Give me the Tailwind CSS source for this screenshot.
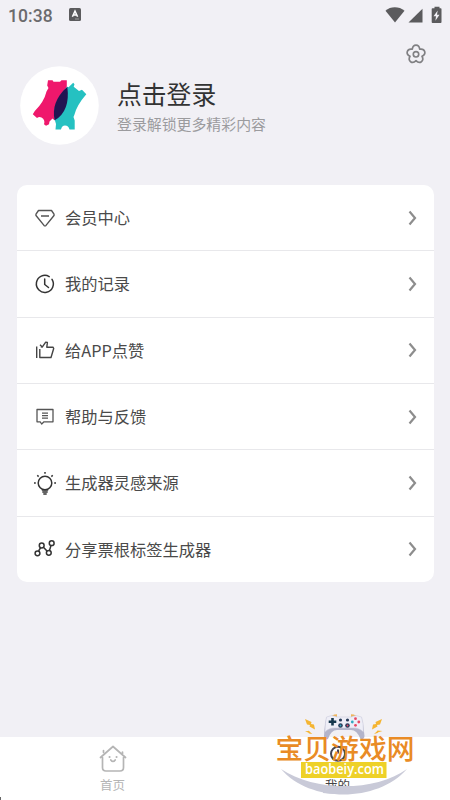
<!DOCTYPE html>
<html lang="zh-CN">
<head>
<meta charset="utf-8">
<meta name="viewport" content="width=device-width, initial-scale=1">
<title>我的</title>
<script src="https://cdn.jsdelivr.net/npm/@tailwindcss/browser@4"></script>
</head>
<body class="bg-[#f1f0f5]">
<div class="relative flex h-[800px] w-[450px] flex-col overflow-hidden bg-[#f1f0f5] font-['Noto_Sans_CJK_SC',sans-serif] text-[#4a4a4a]">
  <!-- status bar -->
  <header class="flex h-8 shrink-0 items-center justify-between pl-2 pr-[8px] text-[#5b5b5d]">
    <div class="flex items-center gap-[17px]">
      <span class="font-[Roboto,sans-serif] text-[17.5px] leading-8 font-medium tracking-[0.1px] text-[#6b6b6d]">10:38</span>
      <svg class="-mt-[3px] -ml-px h-[13px] w-3" viewBox="0 0 12 13"><rect width="12" height="13" rx="1.5" fill="#5b5b5d"/><path d="M3.4 8.8 6 3.1l2.6 5.7M4.3 7h3.4" fill="none" stroke="#fff" stroke-width="1.5"/><path d="M6 11h4" stroke="#aaa" stroke-width=".8"/></svg>
    </div>
    <svg class="-mt-[2px] h-5 w-[58px]" viewBox="0 0 58 20" fill="currentColor"><path d="M1.500 5.800C6.500 1.200 15 1.200 20.500 5.800L11 17.500Z"/><path d="M38.500 3.800V17.500H24.500Z"/><path d="M48.500 3.300h2V1.800h5v1.500h1.200q.8 0 .8.800v13q0 .9-.8.900h-8.200q-.8 0-.8-.9v-13q0-.8.800-.8Z"/><path d="M53.700 5.500 49.500 11.300h2.500L51.400 15.700 55.500 9.800h-2.500Z" fill="#f1f0f5"/></svg>
  </header>
  <!-- settings -->
  <div class="flex h-[33px] shrink-0 justify-end pt-[11px] pr-[23px]">
    <svg class="h-[22px] w-[22px]" viewBox="-11 -11.300 22 22" fill="none" stroke="#808083" stroke-width="1.700" stroke-linejoin="round"><path d="M-3.700-5.100C-3-10.500 3-10.500 3.700-5.100C9.050-6.100 10.900-.4 6 1.950C8.600 6.700 3.700 10.300 0 6.300C-3.700 10.300-8.600 6.700-6 1.950C-10.900-.4-9.050-6.100-3.700-5.100Z"/><circle r="2.700"/></svg>
  </div>
  <!-- profile -->
  <section class="flex h-[120px] shrink-0 items-start pl-5">
    <svg class="mt-px h-[79px] w-[79px] shrink-0" viewBox="0 0 79 79">
      <circle cx="39.500" cy="39.500" r="39.300" fill="#fff"/>
      <path d="M28 14.300H32.500L33.500 15.700H40L41.500 14.300H46.800V20.700L45.600 22.500L47.500 26Q49 45 34.500 54.300L32.500 52.500L29.500 55.500L29 58.200L26 59.800L24 58.300Q25.500 54 21.500 51.500Q19 50.500 17 52L12.800 48.300L14.800 45Q24 36 26.500 25.500L28.500 22L27.200 19.500Z" fill="#ef186c"/>
      <path d="M47.300 20.700 48.500 21.200 53.200 16.700 54.500 18.200 53.700 20.700 59 24.900 62 23.700 66.300 28.300Q57 39 54.500 48.500L53.500 51L54.700 54.500V63.500H49.500Q48.500 59.500 45 59.500Q41.800 59.500 41 63.500H35.500L36 58L34.800 54Q31 37 47.300 20.700Z" fill="#25c1c1"/>
      <path d="M47.300 20.700Q50.500 45 34.700 54.300Q30.500 36 47.300 20.700Z" fill="#221452"/>
    </svg>
    <div class="pl-[18px] pt-[11px]">
      <h1 class="h-[37px] text-[24.800px] leading-[35px] text-[#333]">点击登录</h1>
      <p class="text-[14.900px] leading-[22px] text-[#9b9b9e]">登录解锁更多精彩内容</p>
    </div>
  </section>
  <!-- menu -->
  <nav class="mr-4 ml-[17px] flex h-[397px] shrink-0 flex-col divide-y divide-[#e8e8eb] overflow-hidden rounded-[10px] bg-white text-[16.250px] leading-6">
    <a class="flex flex-1 items-center pl-4 pr-[15px]"><svg class="mr-2 h-6 w-6" viewBox="0 0 24 24" fill="none" stroke="#555" stroke-width="1.400" stroke-linejoin="round"><path d="M5.500 4.500h13L21 8.200q.4.800-.2 1.500L13 19.400q-1 1-2 0L3.200 9.700Q2.600 9 3 8.200ZM8 10h8"/></svg><span class="flex-1 pb-px">会员中心</span><svg class="h-4 w-3" viewBox="0 0 12 16" fill="none" stroke="#8d8d8d" stroke-width="2.200"><path d="m2.500 1.500 5.500 6.500-5.500 6.500"/></svg></a>
    <a class="flex flex-1 items-center pl-4 pr-[15px]"><svg class="mr-2 h-6 w-6" viewBox="0 0 24 24" fill="none" stroke="#333" stroke-width="1.500" stroke-linecap="round"><path d="M16.200 4.600A8.500 8.500 0 1 0 19 7.300M11.700 7v5.500l3.800 3"/></svg><span class="flex-1 pb-px">我的记录</span><svg class="h-4 w-3" viewBox="0 0 12 16" fill="none" stroke="#8d8d8d" stroke-width="2.200"><path d="m2.500 1.500 5.500 6.500-5.500 6.500"/></svg></a>
    <a class="flex flex-1 items-center pl-4 pr-[15px]"><svg class="mr-2 h-6 w-6" viewBox="0 0 24 24" fill="none" stroke="#444" stroke-width="1.400" stroke-linejoin="round"><path d="M3.700 8.500v11.500M6.800 11v8.500H18l2.700-9-.7-1.300h-6.200l.6-4.700-1.700-.4-3.500 5-1.400-.2M7 6.700l2.500 2.500"/></svg><span class="flex-1 pb-px">给APP点赞</span><svg class="h-4 w-3" viewBox="0 0 12 16" fill="none" stroke="#8d8d8d" stroke-width="2.200"><path d="m2.500 1.500 5.500 6.500-5.500 6.500"/></svg></a>
    <a class="flex flex-1 items-center pl-4 pr-[15px]"><svg class="mr-2 h-6 w-6" viewBox="0 0 24 24" fill="none" stroke="#555" stroke-width="1.300" stroke-linejoin="round"><path d="M4 4.500h16v12.300h-9l-2.300 2.200-1.500-2.200H4ZM9 8.200h6M9 10.700h6M9 13.200h6"/></svg><span class="flex-1 pb-0.5">帮助与反馈</span><svg class="h-4 w-3" viewBox="0 0 12 16" fill="none" stroke="#8d8d8d" stroke-width="2.200"><path d="m2.500 1.500 5.500 6.500-5.500 6.500"/></svg></a>
    <a class="flex flex-1 items-center pl-4 pr-[15px]"><svg class="mr-2 h-6 w-6" viewBox="0 0 24 24" fill="none" stroke="#333" stroke-width="1.500"><circle cx="12" cy="12" r="6.800"/><path d="M8.800 18.900h6.400M9.300 20.900h5.400M10.300 22.900h3.400M12 1v1.800M4.300 4.300l1.300 1.300M19.700 4.300l-1.300 1.300M1 12h1.800M21.200 12H23"/></svg><span class="flex-1 pb-px">生成器灵感来源</span><svg class="h-4 w-3" viewBox="0 0 12 16" fill="none" stroke="#8d8d8d" stroke-width="2.200"><path d="m2.500 1.500 5.500 6.500-5.500 6.500"/></svg></a>
    <a class="flex flex-1 items-center pl-4 pr-[15px]"><svg class="mr-2 h-6 w-6" viewBox="0 0 24 24" fill="none" stroke="#333" stroke-width="1.500"><circle cx="4.500" cy="16.300" r="2.400"/><circle cx="8.700" cy="8.500" r="2.400"/><circle cx="15.800" cy="15.800" r="2.400"/><circle cx="18.700" cy="6.200" r="2.400"/><path d="m5.600 14 2-3.400M10.400 10.200l3.600 3.800M16.500 13.400l1.500-4.900"/></svg><span class="flex-1 pb-px">分享票根标签生成器</span><svg class="h-4 w-3" viewBox="0 0 12 16" fill="none" stroke="#8d8d8d" stroke-width="2.200"><path d="m2.500 1.500 5.500 6.500-5.500 6.500"/></svg></a>
  </nav>
  <!-- tab bar -->
  <footer class="mt-auto grid h-[63px] shrink-0 grid-cols-2 bg-white text-[12.500px] leading-5">
    <div class="flex flex-col items-center pt-[7px] text-[#b5b5b5]">
      <svg class="h-[30px] w-7" viewBox="0 0 28 30" fill="none" stroke="#b5b5b5" stroke-width="1.700" stroke-linecap="round" stroke-linejoin="round"><path d="M1.500 13.500 14 2.500l12.500 11M4.500 8.300V6.500M3.500 13.500v10q0 3.500 3.500 3.500h14q3.500 0 3.500-3.500v-10M23.500 10V8M11.800 16q2.200 3 4.400 0"/><path d="M10.500 13h.1M17.500 13h.1" stroke-width="2"/></svg>
      <span class="mt-px">首页</span>
    </div>
    <div class="flex flex-col items-center pt-[7px] text-[#444]">
      <svg class="h-[30px] w-7" viewBox="0 0 28 30" fill="none" stroke="#454553" stroke-width="2"><circle cx="14" cy="9.800" r="7"/><path d="M14 9.500v-4"/></svg>
      <span class="mt-px">我的</span>
    </div>
  </footer>
  <!-- site badge over the tab bar -->
  <svg class="absolute left-[265px] top-[700px] h-[100px] w-40" viewBox="0 0 160 100">
    <path d="M16 69C110 92 50 92 142 69L128 79Q80 94 30 79Z" fill="none"/>
    <path d="M58 86h29v7q-14 2-29 0Z" fill="#c9cad8"/>
    <path d="M16 69C45 103 112 103 142 69C110 92 50 92 16 69Z" fill="#c9cad8"/>
    <path d="M66 17.500q0-3 6-3.200v3zM86 14.300q6 .2 6 3.200l-6-.2z" fill="#efb55b"/>
    <path d="M61.500 18Q67 14.500 72 17H86Q91 14.500 96.500 18Q98 21 99.500 36Q99 40 95.500 39Q92 30 86 30H72Q66 30 63 39Q59 40 59 36Q60 21 61.500 18Z" fill="#b3b4ca"/>
    <path d="M61.500 17Q67 14 72 17H86Q91 14 96.500 17Q98.500 22 98.500 32Q94 27.500 87 28H71Q64 27.500 60 32Q60 22 61.500 17Z" fill="#eeeef7" stroke="#c4c4d6" stroke-width=".5"/>
    <path d="M67.500 18v7.600M63.700 21.800h7.600" stroke="#15374d" stroke-width="2.600"/>
    <g fill="#263a58"><circle cx="75.500" cy="20" r="1.600"/><circle cx="82.500" cy="20" r="1.600"/><circle cx="75.500" cy="25.500" r="2.300"/><circle cx="82.500" cy="25.500" r="2.300"/></g>
    <g fill="#32a9bf"><circle cx="75.500" cy="25.500" r=".9"/><circle cx="87.300" cy="22" r="1.400"/></g>
    <g fill="#e84965"><circle cx="90.500" cy="18.700" r="1.400"/><circle cx="93.800" cy="22" r="1.400"/><circle cx="90.500" cy="25.300" r="1.400"/><circle cx="82.500" cy="25.500" r=".9"/></g>
    <path d="M40 19 46.500 22 46 24 49 24.500 50 29.500 44.500 26.500 45 25 42 24.500ZM40 31.500l4-.8 1 1.300 2.300 2-3.300-.6-.8-1ZM117 19l-6.500 3 .5 2-3 .5-1 5 5.500-3-.5-1.500 3-.5ZM117.500 31l-5-.5-1 1.200-2.500 2.300 3.500-.9.800-.9Z" fill="#f5b532"/>
    <text x="10.500" y="58.800" font-family="Noto Sans CJK SC, sans-serif" font-size="27.800" font-weight="500" fill="#e98b25">宝贝游戏网</text>
    <rect x="36" y="62" width="85.500" height="16" fill="#eed128"/>
    <text x="40" y="74" textLength="79" lengthAdjust="spacingAndGlyphs" font-family="Open Sans, sans-serif" font-size="14.500" font-weight="600" fill="#fff">baobeiy.com</text>
  </svg>
  <span class="absolute bottom-0 left-0 h-[3px] w-px bg-[#666]"></span>
</div>
</body>
</html>
